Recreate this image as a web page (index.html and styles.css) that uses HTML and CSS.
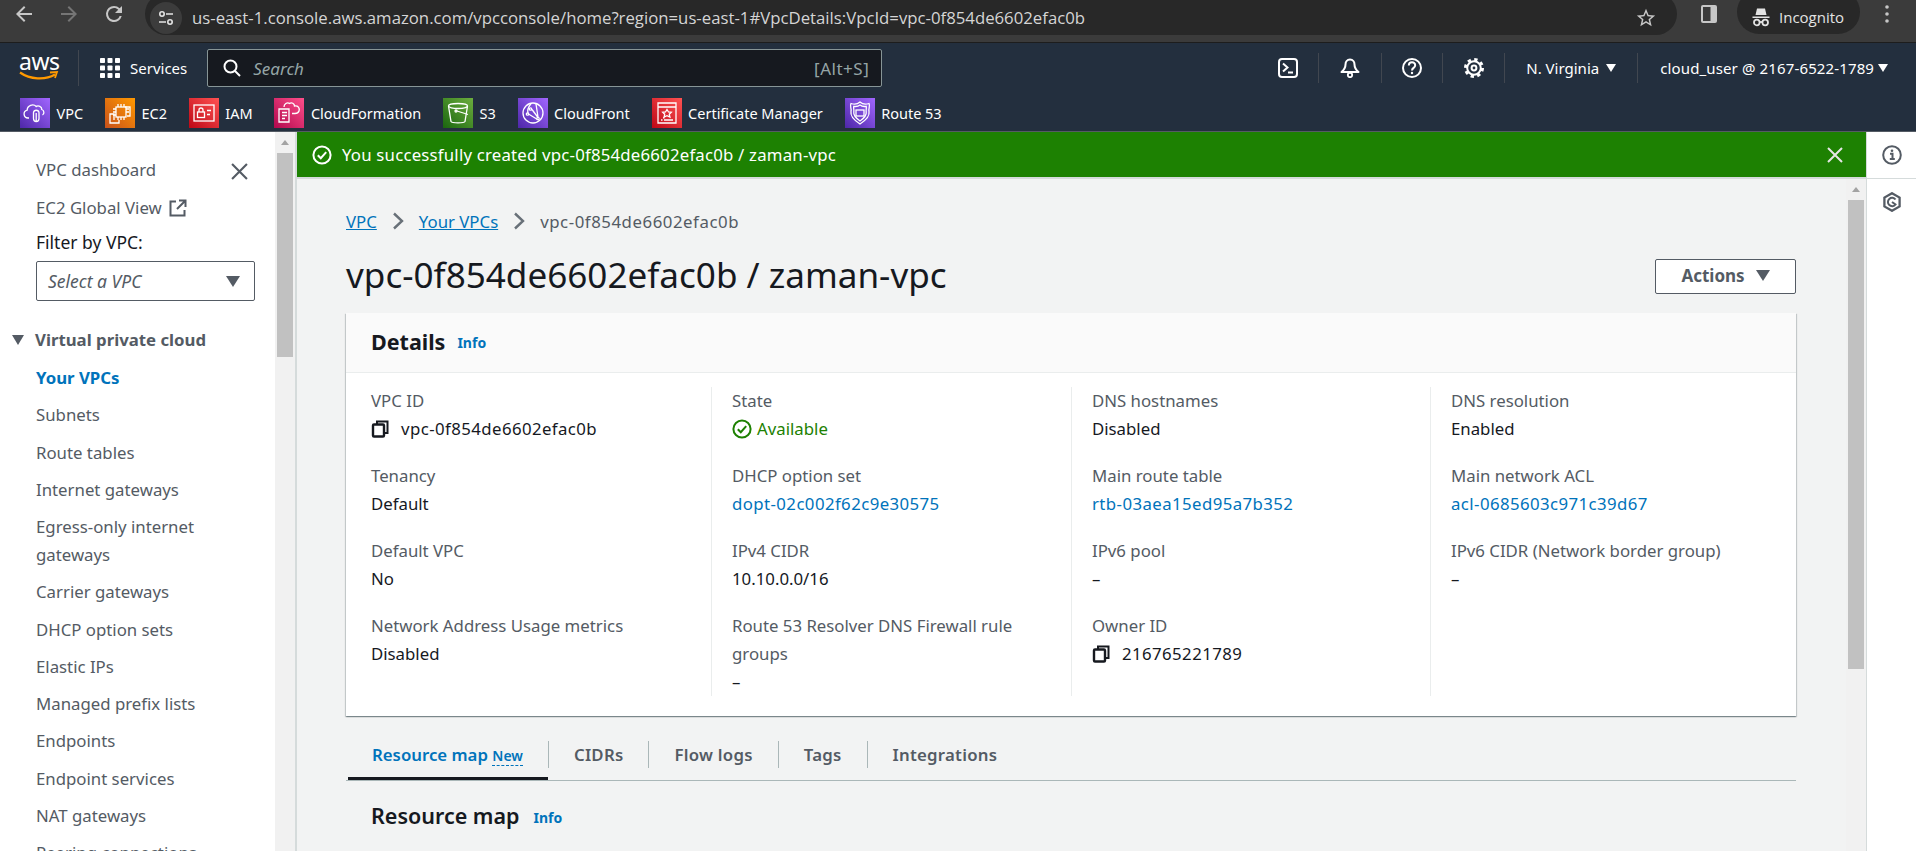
FILE: index.html
```html
<!DOCTYPE html>
<html>
  <head>
    <title>VPC details</title>
    <link rel="stylesheet" href="styles.css">
  </head>
  <body>
    <svg class="defs" width="0" height="0">
      <symbol id="copy" viewBox="0 0 18 18">
        <path d="M6 4V1.5h10.5V13H14" fill="none" stroke="currentColor" stroke-width="2"/>
        <rect x="2" y="4.5" width="11" height="12" rx="1" fill="none" stroke="currentColor" stroke-width="2.4"/>
      </symbol>
      <symbol id="check" viewBox="0 0 20 20">
        <circle cx="10" cy="10" r="8.6" fill="none" stroke="currentColor" stroke-width="2"/>
        <path d="M5.8 10.2l3 3 5.4-6" fill="none" stroke="currentColor" stroke-width="2"/>
      </symbol>
      <symbol id="close" viewBox="0 0 16 16">
        <path d="M1 1l14 14M15 1L1 15" fill="none" stroke="currentColor" stroke-width="2"/>
      </symbol>
      <symbol id="chevron" viewBox="0 0 12 18">
        <path d="M2 1.500l8 7.500-8 7.500" fill="none" stroke="currentColor" stroke-width="2.400"/>
      </symbol>
    </svg>

    <div class="browser-bar">
      <svg class="browser-icon" viewBox="0 0 24 24"><path fill="#c7c7c7" d="M20 11H7.8l5.6-5.6L12 4l-8 8 8 8 1.4-1.4L7.8 13H20z"/></svg>
      <svg class="browser-icon" viewBox="0 0 24 24"><path fill="#757575" d="M4 11h12.2l-5.6-5.6L12 4l8 8-8 8-1.4-1.4 5.6-5.6H4z"/></svg>
      <svg class="browser-icon" viewBox="0 0 24 24"><path fill="#c7c7c7" d="M17.65 6.35A7.96 7.96 0 0 0 12 4a8 8 0 1 0 7.73 10h-2.08A6 6 0 1 1 12 6c1.66 0 3.14.69 4.22 1.78L13 11h7V4z"/></svg>
      <div class="address">
        <span class="site-settings">
          <svg viewBox="0 0 18 18" width="18" height="18"><g fill="none" stroke="#e3e3e3" stroke-width="1.6"><circle cx="5" cy="5" r="2.2"/><path d="M9 5h7M2 13h7"/><circle cx="13" cy="13" r="2.2"/></g></svg>
        </span>
        <span class="url">us-east-1.console.aws.amazon.com/vpcconsole/home?region=us-east-1#VpcDetails:VpcId=vpc-0f854de6602efac0b</span>
        <svg class="star" viewBox="0 0 24 24"><path fill="#c7c7c7" d="M22 9.24l-7.19-.62L12 2 9.19 8.63 2 9.24l5.46 4.73L5.82 21 12 17.27 18.18 21l-1.63-7.03L22 9.24zM12 15.4l-3.76 2.27 1-4.28-3.32-2.88 4.38-.38L12 6.1l1.71 4.04 4.38.38-3.32 2.88 1 4.28L12 15.4z"/></svg>
      </div>
      <svg class="panel-toggle" viewBox="0 0 18 20"><rect x="1" y="1" width="16" height="18" rx="2" fill="#c7c7c7"/><rect x="3" y="3" width="7.5" height="14" fill="#3b3b3b"/></svg>
      <div class="incognito">
        <svg viewBox="0 0 20 20" width="20" height="20"><path fill="#e3e3e3" d="M6 1.5h8l1.5 6.5h-11zM1.5 9.5h17v1.5h-17z"/><g fill="none" stroke="#e3e3e3" stroke-width="1.8"><circle cx="5.8" cy="15.5" r="2.8"/><circle cx="14.2" cy="15.5" r="2.8"/><path d="M8.5 15h3"/></g></svg>
        <span>Incognito</span>
      </div>
      <svg class="kebab" viewBox="0 0 4 20"><circle cx="2" cy="3" r="1.8" fill="#c7c7c7"/><circle cx="2" cy="10" r="1.8" fill="#c7c7c7"/><circle cx="2" cy="17" r="1.8" fill="#c7c7c7"/></svg>
    </div>

    <header class="aws-nav">
      <div class="nav-top">
        <a class="aws-logo">
          <span>aws</span>
          <svg viewBox="0 0 40 11" width="40" height="11"><path d="M1 1.5c10 7 25 8 35 2" fill="none" stroke="#f90" stroke-width="2.2"/><path d="M31 1.5l7-.5-2 6" fill="none" stroke="#f90" stroke-width="1.8"/></svg>
        </a>
        <a class="services">
          <svg viewBox="0 0 20 20" width="20" height="20" fill="#fff"><rect width="5" height="5" rx=".8"/><rect x="7.5" width="5" height="5" rx=".8"/><rect x="15" width="5" height="5" rx=".8"/><rect y="7.5" width="5" height="5" rx=".8"/><rect x="7.5" y="7.5" width="5" height="5" rx=".8"/><rect x="15" y="7.5" width="5" height="5" rx=".8"/><rect y="15" width="5" height="5" rx=".8"/><rect x="7.5" y="15" width="5" height="5" rx=".8"/><rect x="15" y="15" width="5" height="5" rx=".8"/></svg>
          <span>Services</span>
        </a>
        <div class="search">
          <svg viewBox="0 0 18 18" width="18" height="18"><circle cx="7.5" cy="7.5" r="6" fill="none" stroke="#fff" stroke-width="2"/><path d="M12 12l5 5" stroke="#fff" stroke-width="2"/></svg>
          <span class="search-text">Search</span>
          <span class="search-key">[Alt+S]</span>
        </div>
        <div class="nav-tools">
          <a class="tool">
            <svg viewBox="0 0 20 20" width="20" height="20"><rect x="1" y="1" width="18" height="18" rx="3" fill="none" stroke="#fff" stroke-width="2"/><path d="M5 5.5l4.5 4-4.5 4M10 14.5h5" fill="none" stroke="#fff" stroke-width="2"/></svg>
          </a>
          <a class="tool">
            <svg viewBox="0 0 20 20" width="20" height="20"><path d="M10 1.500c-3 0-4.500 2.500-4.500 5 0 3.500-1 5-4 7.500h17c-3-2.500-4-4-4-7.500 0-2.500-1.500-5-4.500-5z" fill="none" stroke="#fff" stroke-width="2" stroke-linejoin="round"/><circle cx="10" cy="17" r="2.200" fill="none" stroke="#fff" stroke-width="1.800"/></svg>
          </a>
          <a class="tool">
            <svg viewBox="0 0 20 20" width="20" height="20"><circle cx="10" cy="10" r="9" fill="none" stroke="#fff" stroke-width="2"/><path d="M6.800 7.500c0-4.300 6.400-4.300 6.400-.2 0 2.700-3.200 2.500-3.200 5.200" fill="none" stroke="#fff" stroke-width="2"/><circle cx="10" cy="15" r="1.200" fill="#fff"/></svg>
          </a>
          <a class="tool">
            <svg viewBox="0 0 20 20" width="20" height="20"><g fill="none" stroke="#fff"><circle cx="10" cy="10" r="8.500" stroke-width="3" stroke-dasharray="3.300 3.370"/><circle cx="10" cy="10" r="6.800" stroke-width="2"/><circle cx="10" cy="10" r="2.400" stroke-width="2"/></g></svg>
          </a>
          <a class="tool region">N. Virginia <i class="caret-white"></i></a>
          <a class="tool account">cloud_user @ 2167-6522-1789 <i class="caret-white"></i></a>
        </div>
      </div>
      <div class="favorites">
        <a class="fav">
          <span class="svc purple"><svg viewBox="0 0 30 30"><g fill="none" stroke="#fff" stroke-width="1.300"><path d="M9 20H8a4 4 0 0 1-.8-7.900c0-4.500 6-7 9-3.600 2-1.500 5.800 0 5.600 3 2.800.8 2.500 4.500.7 5.500"/><path d="M13.500 14.500a2.800 2.800 0 0 1 5.500 0v6c0 4-5.500 4-5.500 0z"/><path d="M16.200 15v8"/></g></svg></span>
          <span>VPC</span>
        </a>
        <a class="fav">
          <span class="svc orange"><svg viewBox="0 0 30 30"><g fill="none" stroke="#fff" stroke-width="1.300"><path d="M9 22V16H5v9h9v-3M20 9h5v9h-3"/><rect x="11" y="9" width="10" height="10"/><path d="M13 6v3M16 6v3M19 6v3M13 19v3M16 19v3M19 19v3M8 11h3M8 14h3M8 17h3M21 11h3M21 14h3"/></g></svg></span>
          <span>EC2</span>
        </a>
        <a class="fav">
          <span class="svc red"><svg viewBox="0 0 30 30"><g fill="none" stroke="#fff" stroke-width="1.300"><rect x="5" y="7" width="20" height="16"/><rect x="8.500" y="14" width="7" height="5.500"/><path d="M10 14v-2a2 2 0 0 1 4 0v2M18 12.500h4M18 16.500h3"/></g></svg></span>
          <span>IAM</span>
        </a>
        <a class="fav">
          <span class="svc pink"><svg viewBox="0 0 30 30"><g fill="none" stroke="#fff" stroke-width="1.300"><path d="M5 11h10v13H5zM8 14.500h5M8 17.500h5M8 20.500h3"/><path d="M10 9c0-3 3-5 5.500-3.500 2-1.500 5 0 5 2.500 3.500-.5 5.500 2 4.500 5-.5 1.500-2 2.500-4 2.500h-3"/></g></svg></span>
          <span>CloudFormation</span>
        </a>
        <a class="fav">
          <span class="svc green"><svg viewBox="0 0 30 30"><g fill="none" stroke="#fff" stroke-width="1.300"><ellipse cx="15" cy="8" rx="9.500" ry="2.500"/><path d="M5.500 8l2.500 15.500c1 1.800 13 1.800 14 0L24.500 8"/><path d="M14 13l11 3.500"/><circle cx="13" cy="13" r="1"/></g></svg></span>
          <span>S3</span>
        </a>
        <a class="fav">
          <span class="svc purple"><svg viewBox="0 0 30 30"><g fill="none" stroke="#fff" stroke-width="1.300"><circle cx="15" cy="15" r="10"/><path d="M13 5.500c-3 4-4 7-3 10M10.500 16l9 5.500M14 11.500l6 8M18 6l2 13"/><circle cx="12.500" cy="11" r="1.200"/><circle cx="9.500" cy="16" r="1.200"/><circle cx="20" cy="20.500" r="1.200"/></g></svg></span>
          <span>CloudFront</span>
        </a>
        <a class="fav">
          <span class="svc red"><svg viewBox="0 0 30 30"><g fill="none" stroke="#fff" stroke-width="1.300"><path d="M6 5h18v20H6zM6 9h18"/><path d="M15 11.500l1.500 2.500 2.800.3-2 2 .6 2.700-2.900-1.400-2.900 1.400.6-2.700-2-2 2.800-.3z"/><path d="M9 22h1.500M12 22h9M11 19.800h1.500"/></g></svg></span>
          <span>Certificate Manager</span>
        </a>
        <a class="fav">
          <span class="svc purple"><svg viewBox="0 0 30 30"><g fill="none" stroke="#fff" stroke-width="1.300"><path d="M15 4c2 1.800 6 2.500 9 1.500 1.500 3-.8 4.500 0 8 .8 4-3.500 9-9 12.500-5.500-3.500-9.800-8.500-9-12.500.8-3.500-1.500-5 0-8 3 1 7 .3 9-1.500z"/><path d="M15 7c1.500 1.200 4 1.800 6.200 1.300.6 2-.5 3.500 0 5.700.5 3-2.700 6.500-6.200 9-3.500-2.500-6.700-6-6.200-9 .5-2.200-.6-3.700 0-5.700 2.200.5 4.700-.1 6.200-1.300z"/><rect x="11" y="12" width="8" height="6"/></g></svg></span>
          <span>Route 53</span>
        </a>
      </div>
    </header>

    <div class="console">
      <aside class="sidebar">
        <nav class="side-content">
          <div class="side-row">
            <a class="side-link">VPC dashboard</a>
            <svg class="side-close"><use href="#close"/></svg>
          </div>
          <a class="side-link global">EC2 Global View
            <svg viewBox="0 0 18 18" width="18" height="18"><path d="M7 2.500H1.500v14h14V11M10 1.500h6.500V8M16 2l-8 8" fill="none" stroke="#545b64" stroke-width="2"/></svg>
          </a>
          <div class="filter-label">Filter by VPC:</div>
          <div class="filter-select">
            <span>Select a VPC</span>
            <i class="caret"></i>
          </div>
          <div class="side-section"><i class="caret small"></i>Virtual private cloud</div>
          <ul class="side-list">
            <li class="active">Your VPCs</li>
            <li>Subnets</li>
            <li>Route tables</li>
            <li>Internet gateways</li>
            <li>Egress-only internet gateways</li>
            <li>Carrier gateways</li>
            <li>DHCP option sets</li>
            <li>Elastic IPs</li>
            <li>Managed prefix lists</li>
            <li>Endpoints</li>
            <li>Endpoint services</li>
            <li>NAT gateways</li>
            <li>Peering connections</li>
          </ul>
        </nav>
        <div class="scrollbar side-scroll">
          <i class="scroll-up"></i>
          <div class="thumb"></div>
        </div>
      </aside>

      <div class="workspace">
        <div class="flash">
          <svg class="flash-icon"><use href="#check"/></svg>
          <span>You successfully created vpc-0f854de6602efac0b / zaman-vpc</span>
          <svg class="flash-close"><use href="#close"/></svg>
        </div>
        <div class="main-wrap">
          <main class="main">
            <div class="breadcrumbs">
              <a>VPC</a>
              <svg class="crumb-sep"><use href="#chevron"/></svg>
              <a>Your VPCs</a>
              <svg class="crumb-sep"><use href="#chevron"/></svg>
              <span class="res-id">vpc-0f854de6602efac0b</span>
            </div>
            <div class="page-head">
              <h1>vpc-0f854de6602efac0b / zaman-vpc</h1>
              <button class="actions">Actions <i class="caret"></i></button>
            </div>
            <section class="card">
              <div class="card-head">
                <h2>Details</h2>
                <a class="info">Info</a>
              </div>
              <div class="details">
                <div class="col">
                  <div class="item">
                    <div class="label">VPC ID</div>
                    <div class="value res-id"><svg class="copy"><use href="#copy"/></svg>vpc-0f854de6602efac0b</div>
                  </div>
                  <div class="item">
                    <div class="label">Tenancy</div>
                    <div class="value">Default</div>
                  </div>
                  <div class="item">
                    <div class="label">Default VPC</div>
                    <div class="value">No</div>
                  </div>
                  <div class="item">
                    <div class="label">Network Address Usage metrics</div>
                    <div class="value">Disabled</div>
                  </div>
                </div>
                <div class="col">
                  <div class="item">
                    <div class="label">State</div>
                    <div class="value ok"><svg class="status"><use href="#check"/></svg>Available</div>
                  </div>
                  <div class="item">
                    <div class="label">DHCP option set</div>
                    <div class="value res-id"><a>dopt-02c002f62c9e30575</a></div>
                  </div>
                  <div class="item">
                    <div class="label">IPv4 CIDR</div>
                    <div class="value">10.10.0.0/16</div>
                  </div>
                  <div class="item">
                    <div class="label">Route 53 Resolver DNS Firewall rule groups</div>
                    <div class="value">–</div>
                  </div>
                </div>
                <div class="col">
                  <div class="item">
                    <div class="label">DNS hostnames</div>
                    <div class="value">Disabled</div>
                  </div>
                  <div class="item">
                    <div class="label">Main route table</div>
                    <div class="value res-id"><a>rtb-03aea15ed95a7b352</a></div>
                  </div>
                  <div class="item">
                    <div class="label">IPv6 pool</div>
                    <div class="value">–</div>
                  </div>
                  <div class="item">
                    <div class="label">Owner ID</div>
                    <div class="value res-id"><svg class="copy"><use href="#copy"/></svg>216765221789</div>
                  </div>
                </div>
                <div class="col">
                  <div class="item">
                    <div class="label">DNS resolution</div>
                    <div class="value">Enabled</div>
                  </div>
                  <div class="item">
                    <div class="label">Main network ACL</div>
                    <div class="value res-id"><a>acl-0685603c971c39d67</a></div>
                  </div>
                  <div class="item">
                    <div class="label">IPv6 CIDR (Network border group)</div>
                    <div class="value">–</div>
                  </div>
                </div>
              </div>
            </section>
            <div class="tabs">
              <a class="tab current">Resource map <span class="new">New</span></a>
              <a class="tab">CIDRs</a>
              <a class="tab">Flow logs</a>
              <a class="tab">Tags</a>
              <a class="tab">Integrations</a>
            </div>
            <div class="section-head">
              <h2>Resource map</h2>
              <a class="info">Info</a>
            </div>
          </main>
          <div class="scrollbar main-scroll">
            <i class="scroll-up"></i>
            <div class="thumb"></div>
          </div>
        </div>
      </div>

      <aside class="tools-rail">
        <div class="rail-top">
          <svg viewBox="0 0 20 20" width="20" height="20"><circle cx="10" cy="10" r="8.800" fill="none" stroke="#545b64" stroke-width="2"/><path d="M8 8.800h2.500v5M7.800 14h5" fill="none" stroke="#545b64" stroke-width="2"/><circle cx="10" cy="5.800" r="1.300" fill="#545b64"/></svg>
        </div>
        <div class="rail-bottom">
          <svg viewBox="0 0 20 20" width="20" height="20"><path d="M10 1.200l7.600 4.400v8.800L10 18.800l-7.600-4.400V5.600z" fill="none" stroke="#545b64" stroke-width="2.300"/><path d="M13.500 7.500a4.200 4.200 0 1 0 0 5L10 10" fill="none" stroke="#545b64" stroke-width="2"/></svg>
        </div>
      </aside>
    </div>
  </body>
</html>
```
FILE: styles.css
```css
* {
  box-sizing: border-box;
}

html,
body {
  height: 851px;
}

body {
  margin: 0;
  overflow: hidden;
  display: flex;
  flex-direction: column;
  background: #fff;
  font-family: "Noto Sans", "Open Sans", Arial, sans-serif;
  font-size: 16.8px;
  color: #16191f;
}

a {
  color: #0073bb;
  text-decoration: none;
}

h1,
h2 {
  margin: 0;
  font-weight: 400;
}

ul {
  list-style: none;
  margin: 0;
  padding: 0;
}

.defs {
  position: absolute;
}

/* browser chrome */
.browser-bar {
  flex: none;
  height: 43px;
  display: flex;
  align-items: flex-start;
  overflow: hidden;
  padding-left: 12px;
  background: #3b3b3b;
  border-bottom: 1px solid #1d1d1d;
}

.browser-icon {
  width: 24px;
  height: 24px;
  margin: 2px 21px 0 0;
}

.address {
  width: 1532px;
  height: 42px;
  margin: -7px 0 0 -2px;
  padding-left: 5px;
  display: flex;
  align-items: center;
  border-radius: 21px;
  background: #282828;
}

.site-settings {
  width: 32px;
  height: 32px;
  margin-top: 7px;
  display: flex;
  align-items: center;
  justify-content: center;
  border-radius: 50%;
  background: #3c3c3c;
}

.url {
  margin: 7px 0 0 10px;
  flex: 1;
  font-family: "Open Sans", sans-serif;
  font-size: 16.75px;
  color: #d5d5d5;
  white-space: nowrap;
}

.star {
  width: 22px;
  height: 22px;
  margin: 7px 20px 0 0;
}

.panel-toggle {
  width: 18px;
  height: 20px;
  margin: 4px 0 0 23px;
}

.incognito {
  width: 123px;
  height: 44px;
  margin: -10px 0 0 19px;
  padding: 10px 0 0 14px;
  display: flex;
  align-items: center;
  gap: 8px;
  border-radius: 22px;
  background: #282828;
  font-family: "Open Sans", sans-serif;
  font-size: 15px;
  color: #e3e3e3;
}

.kebab {
  width: 4px;
  height: 20px;
  margin: 4px 0 0 25px;
}

/* aws nav */
.aws-nav {
  flex: none;
  height: 88px;
  background: #232f3e;
  color: #fff;
}

.nav-top {
  height: 50px;
  display: flex;
  align-items: center;
  padding-left: 19px;
}

.nav-top a {
  color: #fff;
}

.aws-logo {
  width: 60px;
  height: 36px;
  display: flex;
  flex-direction: column;
  border-right: 1px solid #414750;
  font-size: 23px;
  line-height: 22px;
  letter-spacing: -.5px;
}

.aws-logo svg {
  margin-top: -1px;
}

.services {
  margin-left: 21px;
  display: flex;
  align-items: center;
  gap: 10px;
  font-size: 15px;
}

.search {
  width: 675px;
  height: 38px;
  margin: 0 0 0 20px;
  padding: 0 12px 0 15px;
  display: flex;
  align-items: center;
  border: 1px solid #879596;
  border-radius: 2px;
  background: #16191f;
  color: #95a5a6;
  font-size: 17px;
}

.search-text {
  flex: 1;
  margin-left: 12px;
  font-style: italic;
}

.search-key {
  letter-spacing: .5px;
}

.nav-tools {
  flex: 1;
  display: flex;
  align-items: center;
  margin-left: 396px;
}

.tool {
  height: 30px;
  width: 64px;
  display: flex;
  align-items: center;
  justify-content: center;
  border-right: 1px solid #414750;
  font-size: 15px;
  white-space: nowrap;
}

.tool:first-child {
  width: 41px;
  justify-content: flex-start;
}

.tool:nth-child(2) {
  width: 63px;
}

.tool:nth-child(3) {
  width: 61px;
}

.tool:nth-child(4) {
  width: 62px;
}

.region {
  width: 133px;
  gap: 7px;
  border-right: 1px solid #414750;
}

.account {
  width: auto;
  margin-left: 22px;
  gap: 4px;
  border-right: 0;
  letter-spacing: .13px;
}

.caret-white {
  width: 0;
  height: 0;
  border-left: 5.5px solid transparent;
  border-right: 5.5px solid transparent;
  border-top: 8px solid #fff;
}

.favorites {
  display: flex;
  height: 38px;
  padding: 5px 0 0 20px;
}

.fav {
  display: flex;
  align-items: center;
  gap: 6.5px;
  margin-right: 21.8px;
  height: 30px;
  color: #fff;
  font-size: 14.5px;
}

.svc {
  width: 30px;
  height: 30px;
  flex: none;
}

.svc svg {
  display: block;
}

.purple {
  background: linear-gradient(45deg, #4d27a8, #a166ff);
}

.orange {
  background: linear-gradient(45deg, #c8511b, #f90);
}

.red {
  background: linear-gradient(45deg, #bd0816, #ff5252);
}

.pink {
  background: linear-gradient(45deg, #b0084d, #ff4f8b);
}

.green {
  background: linear-gradient(45deg, #1b660f, #6cae3e);
}

/* page layout */
.console {
  flex: 1;
  min-height: 0;
  display: flex;
  border-top: 1px solid #545b64;
}

.sidebar {
  width: 297px;
  flex: none;
  display: flex;
  overflow: hidden;
  border-right: 2px solid #d5dbdb;
}

.side-content {
  width: 275px;
  flex: none;
  padding: 24px 20px 0 36px;
  color: #545b64;
}

.side-row {
  display: flex;
  align-items: center;
  justify-content: space-between;
  height: 28px;
  margin-bottom: 10px;
}

.side-link {
  color: #545b64;
  line-height: 28px;
}

.side-close {
  width: 17px;
  height: 17px;
  margin: 3px 7px 0 0;
  color: #545b64;
}

.global {
  display: flex;
  align-items: center;
  gap: 7px;
}

.filter-label {
  margin-top: 6px;
  line-height: 28px;
  font-size: 17.5px;
  color: #16191f;
}

.filter-select {
  width: 219px;
  height: 40px;
  margin-top: 5px;
  padding: 0 14px 0 11px;
  display: flex;
  align-items: center;
  justify-content: space-between;
  border: 1px solid #545b64;
  border-radius: 2px;
  font-size: 17.5px;
  font-style: italic;
}

.caret {
  display: inline-block;
  width: 0;
  height: 0;
  border-left: 7.500px solid transparent;
  border-right: 7.500px solid transparent;
  border-top: 11px solid #545b64;
}

.side-section {
  position: relative;
  left: -24px;
  width: 260px;
  display: flex;
  align-items: center;
  gap: 11px;
  margin-top: 25px;
  line-height: 28px;
  font-weight: 700;
}

.side-section .small {
  border-left-width: 6.500px;
  border-right-width: 6.500px;
  border-top-width: 10px;
}

.side-list {
  margin-top: 10px;
}

.side-list li {
  line-height: 28px;
  margin-bottom: 9.250px;
}

.side-list .active {
  color: #0073bb;
  font-weight: 700;
}

.scrollbar {
  flex: none;
  width: 20px;
  background: #f1f1f1;
  padding: 0 2px;
}

.scroll-up {
  display: block;
  width: 0;
  margin: 8px auto 0;
  border-left: 4.500px solid transparent;
  border-right: 4.500px solid transparent;
  border-bottom: 5px solid #a3a3a3;
}

.thumb {
  margin-top: 8px;
  background: #c1c1c1;
}

.side-scroll .thumb {
  height: 204px;
}

.workspace {
  flex: 1;
  min-width: 0;
  display: flex;
  flex-direction: column;
}

.flash {
  flex: none;
  height: 47px;
  padding: 0 23px 0 15px;
  display: flex;
  align-items: center;
  background: #1d8102;
  border-bottom: 2px solid #d5dbdb;
  color: #fff;
}

.flash span {
  flex: 1;
  margin-left: 10px;
  letter-spacing: .2px;
}

.flash-icon {
  width: 20px;
  height: 20px;
}

.flash-close {
  width: 16px;
  height: 16px;
  color: #e6e6e6;
}

.main-wrap {
  flex: 1;
  min-height: 0;
  display: flex;
  background: #f2f3f3;
}

.main {
  flex: 1;
  min-width: 0;
  padding: 28px 50px 0 49px;
}

.main-scroll .thumb {
  height: 469px;
}

.breadcrumbs {
  display: flex;
  align-items: center;
  height: 28px;
  gap: 15px;
  color: #545b64;
}

.breadcrumbs a {
  text-decoration: underline;
}

.res-id {
  letter-spacing: .42px;
}

.breadcrumbs .res-id {
  letter-spacing: .55px;
}

.crumb-sep {
  width: 12px;
  height: 18px;
  color: #687078;
}

.page-head {
  height: 61px;
  margin-top: 8px;
  display: flex;
  align-items: center;
  justify-content: space-between;
}

.page-head h1 {
  font-size: 35.1px;
}

.actions {
  width: 141px;
  height: 35px;
  margin-top: 5px;
  padding-bottom: 2px;
  display: flex;
  align-items: center;
  justify-content: center;
  gap: 11px;
  background: #fff;
  border: 1px solid #545b64;
  border-radius: 2px;
  font-family: inherit;
  font-size: 17px;
  font-weight: 700;
  color: #545b64;
}

.card {
  margin-top: 9px;
  height: 403px;
  background: #fff;
  box-shadow: 0 1px 1px 0 rgba(0, 28, 36, .3), 1px 1px 1px 0 rgba(0, 28, 36, .15), -1px 1px 1px 0 rgba(0, 28, 36, .15);
}

.card-head {
  height: 60px;
  padding: 0 0 3px 25px;
  display: flex;
  align-items: center;
  gap: 12px;
  background: #fafafa;
  border-bottom: 1px solid #eaeded;
}

.card-head h2,
.section-head h2 {
  font-size: 21.5px;
  font-weight: 700;
}

.section-head h2 {
  font-weight: 600;
}

.info {
  font-size: 14px;
  font-weight: 700;
  margin-top: 3px;
}

.details {
  display: grid;
  grid-template-columns: 365px 360px 359px 1fr;
  padding-top: 14px;
}

.col {
  height: 309px;
  padding: 0 20px;
  border-left: 1px solid #eaeded;
}

.col:first-child {
  padding-left: 25px;
  border-left: 0;
}

.item {
  margin-bottom: 19px;
}

.label,
.value {
  line-height: 28px;
}

.label {
  color: #545b64;
}

.value {
  display: flex;
  align-items: center;
}

.ok {
  color: #1d8102;
}

.copy {
  width: 18px;
  height: 18px;
  margin-right: 12px;
  color: #16191f;
}

.status {
  width: 20px;
  height: 20px;
  margin-right: 5px;
  color: #1d8102;
}

.tabs {
  margin-top: 25px;
  height: 40px;
  display: flex;
  border-bottom: 1px solid #aab7b8;
}

.tab {
  position: relative;
  height: 27px;
  padding: 0 25px;
  border-left: 1px solid #aab7b8;
  font-weight: 600;
  line-height: 27px;
  letter-spacing: .25px;
  color: #545b64;
}

.tab:first-child {
  padding-left: 26px;
  border-left: 0;
  letter-spacing: 0;
}

.current {
  color: #0073bb;
}

.current::after {
  content: "";
  position: absolute;
  left: 2px;
  right: 0;
  top: 36px;
  height: 3px;
  background: #16191f;
}

.new {
  font-size: 14px;
  border-bottom: 1px dashed #0073bb;
}

.section-head {
  margin: 20px 0 0 25px;
  display: flex;
  align-items: center;
  gap: 14px;
}

.tools-rail {
  width: 50px;
  flex: none;
  border-left: 1px solid #d5dbdb;
}

.rail-top {
  height: 47px;
  display: flex;
  align-items: center;
  justify-content: center;
  border-bottom: 1px solid #d5dbdb;
}

.rail-bottom {
  padding-top: 13px;
  display: flex;
  justify-content: center;
}
```
